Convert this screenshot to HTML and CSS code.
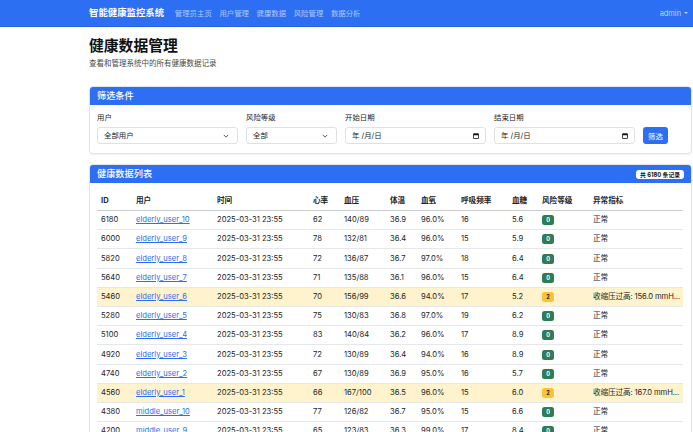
FILE: index.html
```html
<!DOCTYPE html>
<html lang="zh">
<head>
<meta charset="utf-8">
<title>健康数据管理</title>
<link rel="stylesheet" href="styles.css">
</head>
<body>
<nav class="navbar">
  <div class="nav-inner">
    <span class="brand">智能健康监控系统</span>
    <ul class="nav-links">
      <li>管理员主页</li>
      <li>用户管理</li>
      <li>健康数据</li>
      <li>风险管理</li>
      <li>数据分析</li>
    </ul>
    <span class="user">admin <span class="caret"></span></span>
  </div>
</nav>
<main class="container">
  <h1 class="title">健康数据管理</h1>
  <p class="subtitle">查看和管理系统中的所有健康数据记录</p>

  <section class="card">
    <div class="card-header"><span>筛选条件</span></div>
    <div class="card-body filter">
      <div class="field">
        <label>用户</label>
        <div class="control">全部用户<svg class="chev" viewBox="0 0 8 5"><path d="M1 1l3 3 3-3" fill="none" stroke="#343a40" stroke-width="1.1"/></svg></div>
      </div>
      <div class="field">
        <label>风险等级</label>
        <div class="control">全部<svg class="chev" viewBox="0 0 8 5"><path d="M1 1l3 3 3-3" fill="none" stroke="#343a40" stroke-width="1.1"/></svg></div>
      </div>
      <div class="field">
        <label>开始日期</label>
        <div class="control">年 /月/日<svg class="cal" viewBox="0 0 8 8"><rect x="0.6" y="1" width="6.8" height="6.4" rx="0.6" fill="none" stroke="#111" stroke-width="1.1"/><rect x="0.6" y="1" width="6.8" height="2" fill="#111"/></svg></div>
      </div>
      <div class="field">
        <label>结束日期</label>
        <div class="control">年 /月/日<svg class="cal" viewBox="0 0 8 8"><rect x="0.6" y="1" width="6.8" height="6.4" rx="0.6" fill="none" stroke="#111" stroke-width="1.1"/><rect x="0.6" y="1" width="6.8" height="2" fill="#111"/></svg></div>
      </div>
      <div class="field">
        <button class="btn">筛选</button>
      </div>
    </div>
  </section>

  <section class="card list">
    <div class="card-header"><span>健康数据列表</span><span class="count">共 6180 条记录</span></div>
    <div class="card-body">
      <table class="data">
        <colgroup>
          <col style="width:35px"><col style="width:81px"><col style="width:96px"><col style="width:31px"><col style="width:46px"><col style="width:31px"><col style="width:40px"><col style="width:51px"><col style="width:30px"><col style="width:51px"><col style="width:94px">
        </colgroup>
        <thead>
          <tr><th>ID</th><th>用户</th><th>时间</th><th>心率</th><th>血压</th><th>体温</th><th>血氧</th><th>呼吸频率</th><th>血糖</th><th>风险等级</th><th>异常指标</th></tr>
        </thead>
        <tbody>
          <tr><td>6180</td><td><a>elderly_user_10</a></td><td>2025-03-31 23:55</td><td>62</td><td>140/89</td><td>36.9</td><td>96.0%</td><td>16</td><td>5.6</td><td><span class="badge ok">0</span></td><td>正常</td></tr>
          <tr><td>6000</td><td><a>elderly_user_9</a></td><td>2025-03-31 23:55</td><td>78</td><td>132/81</td><td>36.4</td><td>96.0%</td><td>15</td><td>5.9</td><td><span class="badge ok">0</span></td><td>正常</td></tr>
          <tr><td>5820</td><td><a>elderly_user_8</a></td><td>2025-03-31 23:55</td><td>72</td><td>136/87</td><td>36.7</td><td>97.0%</td><td>18</td><td>6.4</td><td><span class="badge ok">0</span></td><td>正常</td></tr>
          <tr><td>5640</td><td><a>elderly_user_7</a></td><td>2025-03-31 23:55</td><td>71</td><td>135/88</td><td>36.1</td><td>96.0%</td><td>15</td><td>6.4</td><td><span class="badge ok">0</span></td><td>正常</td></tr>
          <tr class="warn"><td>5460</td><td><a>elderly_user_6</a></td><td>2025-03-31 23:55</td><td>70</td><td>156/99</td><td>36.6</td><td>94.0%</td><td>17</td><td>5.2</td><td><span class="badge hi">2</span></td><td class="ell">收缩压过高: 156.0 mmH...</td></tr>
          <tr><td>5280</td><td><a>elderly_user_5</a></td><td>2025-03-31 23:55</td><td>75</td><td>130/83</td><td>36.8</td><td>97.0%</td><td>19</td><td>6.2</td><td><span class="badge ok">0</span></td><td>正常</td></tr>
          <tr><td>5100</td><td><a>elderly_user_4</a></td><td>2025-03-31 23:55</td><td>83</td><td>140/84</td><td>36.2</td><td>96.0%</td><td>17</td><td>8.9</td><td><span class="badge ok">0</span></td><td>正常</td></tr>
          <tr><td>4920</td><td><a>elderly_user_3</a></td><td>2025-03-31 23:55</td><td>72</td><td>130/89</td><td>36.4</td><td>94.0%</td><td>16</td><td>8.9</td><td><span class="badge ok">0</span></td><td>正常</td></tr>
          <tr><td>4740</td><td><a>elderly_user_2</a></td><td>2025-03-31 23:55</td><td>67</td><td>130/89</td><td>36.9</td><td>95.0%</td><td>16</td><td>5.7</td><td><span class="badge ok">0</span></td><td>正常</td></tr>
          <tr class="warn"><td>4560</td><td><a>elderly_user_1</a></td><td>2025-03-31 23:55</td><td>66</td><td>167/100</td><td>36.5</td><td>96.0%</td><td>15</td><td>6.0</td><td><span class="badge hi">2</span></td><td class="ell">收缩压过高: 167.0 mmH...</td></tr>
          <tr><td>4380</td><td><a>middle_user_10</a></td><td>2025-03-31 23:55</td><td>77</td><td>126/82</td><td>36.7</td><td>95.0%</td><td>15</td><td>6.6</td><td><span class="badge ok">0</span></td><td>正常</td></tr>
          <tr><td>4200</td><td><a>middle_user_9</a></td><td>2025-03-31 23:55</td><td>65</td><td>123/83</td><td>36.3</td><td>99.0%</td><td>17</td><td>8.4</td><td><span class="badge ok">0</span></td><td>正常</td></tr>
        </tbody>
      </table>
    </div>
  </section>
</main>
</body>
</html>
```

FILE: styles.css
```css
* { box-sizing: border-box; }
html, body { margin: 0; padding: 0; }
body {
  width: 693px;
  height: 432px;
  overflow: hidden;
  background: #fff;
  color: #212529;
  font-family: Inter, "Liberation Sans", "Noto Sans CJK SC", sans-serif;
  font-size: 7.6px;
  line-height: 1.5;
}

.navbar {
  height: 27px;
  background: #2c6ff2;
  border-bottom: 1px solid #2563e6;
}
.nav-inner {
  height: 27px;
  padding-left: 89px;
  padding-right: 5px;
  display: flex;
  align-items: center;
}
.brand {
  color: #fff;
  font-size: 9.4px;
  font-weight: 700;
  margin-right: 7px;
}
.nav-links {
  list-style: none;
  margin: 0;
  padding: 0;
  display: flex;
  flex: 1;
}
.nav-links li {
  color: rgba(255,255,255,0.62);
  font-size: 7.4px;
  padding: 0 3.8px;
}
.user {
  color: rgba(255,255,255,0.7);
  font-size: 7.4px;
  display: flex;
  align-items: center;
  gap: 3px;
}
.caret {
  display: inline-block;
  border-left: 2.2px solid transparent;
  border-right: 2.2px solid transparent;
  border-top: 2.5px solid rgba(255,255,255,0.7);
}

.container {
  margin-left: 89px;
  width: 603px;
}
.title {
  margin: 9px 0 0;
  font-size: 14.8px;
  line-height: 20px;
  font-weight: 700;
  color: #111;
}
.subtitle {
  margin: 2px 0 0;
  font-size: 7.5px;
  line-height: 12px;
  color: #4a4a4a;
}

.card {
  margin-top: 16px;
  border: 1px solid #e2e5e9;
  border-radius: 4px;
  box-shadow: 0 1px 2px rgba(0,0,0,0.06);
  background: #fff;
  overflow: hidden;
}
.card.list { margin-top: 10px; }
.card-header {
  height: 18px;
  background: #2c6ff2;
  color: #fff;
  padding: 0 7px;
  display: flex;
  align-items: center;
  justify-content: space-between;
  font-size: 9.2px;
  font-weight: 500;
}
.count {
  background: #fff;
  color: #111;
  font-size: 5.8px;
  font-weight: 700;
  line-height: 9px;
  padding: 0 4px;
  border-radius: 3px;
}
.card-body {
  padding: 8px 7px;
}

.filter {
  display: grid;
  grid-template-columns: 141px 91px 141px 141px 25px;
  column-gap: 8px;
  align-items: end;
  padding-top: 8px;
  padding-bottom: 9px;
}
.field label {
  display: block;
  font-size: 7.4px;
  line-height: 10px;
  margin-bottom: 4px;
}
.control {
  height: 17px;
  border: 1px solid #dee2e6;
  border-radius: 3px;
  padding: 0 6px;
  display: flex;
  align-items: center;
  justify-content: space-between;
  font-size: 7.4px;
}
.chev { width: 6px; height: 4px; margin-right: 2px; }
.cal { width: 6px; height: 6px; margin-right: 0; }
.btn {
  width: 25px;
  height: 17px;
  border: 0;
  border-radius: 3px;
  background: #2c6ff2;
  color: #fff;
  font-family: inherit;
  font-size: 7.4px;
  padding: 0;
}

.data {
  width: 586px;
  table-layout: fixed;
  border-collapse: collapse;
}
.data th, .data td {
  text-align: left;
  padding: 0 4px;
  height: 19.2px;
  line-height: 10px;
  white-space: nowrap;
  overflow: hidden;
  border-bottom: 1px solid #e5e7ea;
  vertical-align: middle;
}
.data thead th {
  font-weight: 700;
  height: 19.6px;
  padding-top: 1px;
  border-bottom: 1px solid #c9ccd0;
}
.data tr.warn td { background: #fff3cd; }
.data a {
  color: #2c6ff2;
  text-decoration: underline;
}
.badge {
  display: inline-block;
  width: 12px;
  height: 10px;
  border-radius: 2.5px;
  text-align: center;
  font-size: 5.5px;
  line-height: 10px;
  font-weight: 700;
}
.badge.ok { background: #2e7d55; color: #fff; }
.badge.hi { background: #f8c33a; color: #222; }
.data td.ell {
  padding-right: 0;
  text-overflow: clip;
  letter-spacing: -0.1px;
}
```
